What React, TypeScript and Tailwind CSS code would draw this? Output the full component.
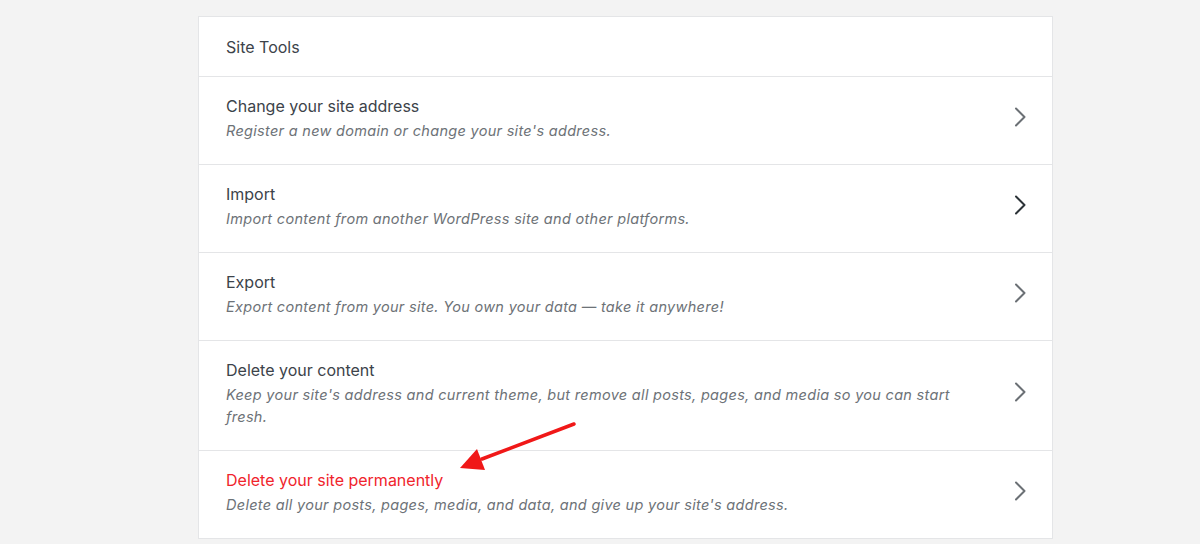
import React from 'react';

const rows = [
  {
    title: 'Change your site address',
    desc: "Register a new domain or change your site's address.",
  },
  {
    title: 'Import',
    desc: 'Import content from another WordPress site and other platforms.',
    dark: true,
  },
  {
    title: 'Export',
    desc: 'Export content from your site. You own your data — take it anywhere!',
  },
  {
    title: 'Delete your content',
    desc: "Keep your site's address and current theme, but remove all posts, pages, and media so you can start fresh.",
  },
  {
    title: 'Delete your site permanently',
    desc: "Delete all your posts, pages, media, and data, and give up your site's address.",
    danger: true,
  },
];

const Chevron: React.FC<{ dark?: boolean }> = ({ dark }) => (
  <svg width="14" height="22" viewBox="0 0 14 22" className="shrink-0">
    <path
      d="M3 2.5 L11.5 11 L3 19.5"
      fill="none"
      stroke={dark ? '#2c3338' : '#6b7075'}
      strokeWidth="2"
      strokeLinecap="round"
      strokeLinejoin="round"
    />
  </svg>
);

export default function App() {
  return (
    <div
      className="relative min-h-[544px] w-full bg-[#f3f3f3] pt-4"
      style={{ fontFamily: 'Inter, "Liberation Sans", Arial, sans-serif' }}
    >
      <div className="ml-[198px] w-[855px] border border-[#e4e5e7] bg-white">
        <div className="flex h-[60px] items-center border-b border-[#e4e5e7] px-[27px] text-[16px] text-[#3c434a]">
          Site Tools
        </div>
        {rows.map((row, i) => (
          <div
            key={row.title}
            className={`flex items-center justify-between gap-8 pl-[27px] pr-[25px] pt-[15px] pb-[22px] ${
              i < rows.length - 1 ? 'border-b border-[#e4e5e7]' : ''
            }`}
          >
            <div className="max-w-[745px]">
              <div
                className={`text-[16px] leading-[28px] ${
                  row.danger ? 'text-[#f0242c]' : 'text-[#3c434a]'
                }`}
              >
                {row.title}
              </div>
              <div className="text-[14.5px] italic leading-[22px] tracking-[0.3px] text-[#6d7277]">
                {row.desc}
              </div>
            </div>
            <Chevron dark={row.dark} />
          </div>
        ))}
      </div>
      <svg
        className="absolute left-0 top-0 pointer-events-none"
        width="1200"
        height="544"
        viewBox="0 0 1200 544"
      >
        <line x1="574" y1="424" x2="482" y2="459" stroke="#f01818" strokeWidth="3.5" strokeLinecap="round" />
        <polygon points="460,468 477,449 485,470" fill="#f01818" />
      </svg>
    </div>
  );
}
